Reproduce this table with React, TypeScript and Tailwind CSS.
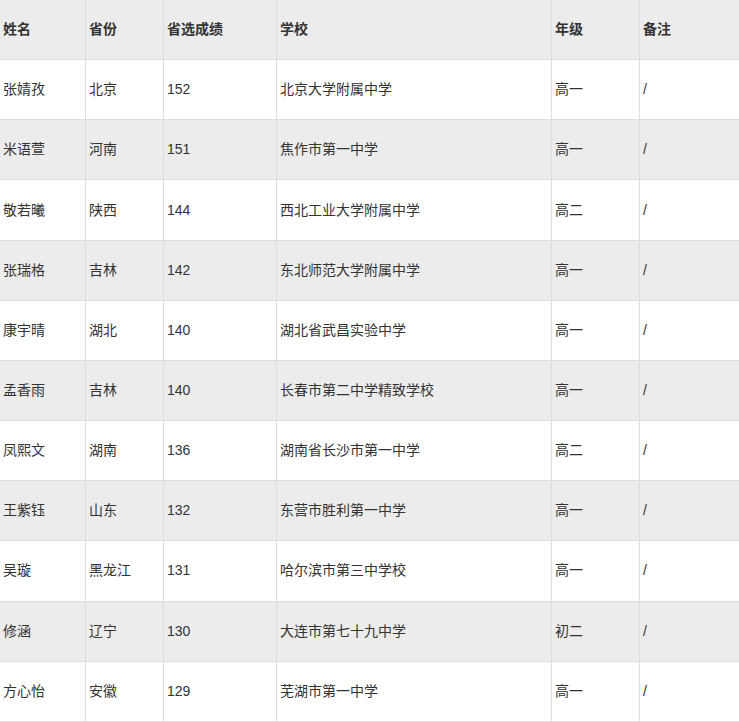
const header = ["姓名", "省份", "省选成绩", "学校", "年级", "备注"];

const rows = [
  ["张婧孜", "北京", "152", "北京大学附属中学", "高一", "/"],
  ["米语萱", "河南", "151", "焦作市第一中学", "高一", "/"],
  ["敬若曦", "陕西", "144", "西北工业大学附属中学", "高二", "/"],
  ["张瑞格", "吉林", "142", "东北师范大学附属中学", "高一", "/"],
  ["康宇晴", "湖北", "140", "湖北省武昌实验中学", "高一", "/"],
  ["孟香雨", "吉林", "140", "长春市第二中学精致学校", "高一", "/"],
  ["凤熙文", "湖南", "136", "湖南省长沙市第一中学", "高二", "/"],
  ["王紫钰", "山东", "132", "东营市胜利第一中学", "高一", "/"],
  ["吴璇", "黑龙江", "131", "哈尔滨市第三中学校", "高一", "/"],
  ["修涵", "辽宁", "130", "大连市第七十九中学", "初二", "/"],
  ["方心怡", "安徽", "129", "芜湖市第一中学", "高一", "/"],
];

const widths = ["w-[86px]", "w-[78px]", "w-[113px]", "w-[275px]", "w-[88px]", "flex-1"];

const Row = ({ cells, head, shaded }: { cells: string[]; head?: boolean; shaded?: boolean }) => (
  <div
    className={`flex h-[60.17px] border-b border-[#dddddd] ${shaded ? "bg-[#ececec]" : "bg-white"} ${head ? "font-bold" : ""}`}
  >
    {cells.map((c, i) => (
      <div
        key={i}
        className={`${widths[i]} shrink-0 flex items-center pl-[3px] ${i < 5 ? "border-r border-[#dddddd]" : ""}`}
      >
        {c}
      </div>
    ))}
  </div>
);

export default function App() {
  return (
    <div
      className="w-[739px] h-[722px] overflow-hidden bg-white text-[14px] text-[#333333]"
      style={{ fontFamily: '"Liberation Sans", "Noto Sans CJK SC", sans-serif' }}
    >
      <Row cells={header} head shaded />
      {rows.map((r, i) => (
        <Row key={i} cells={r} shaded={i % 2 === 1} />
      ))}
    </div>
  );
}
